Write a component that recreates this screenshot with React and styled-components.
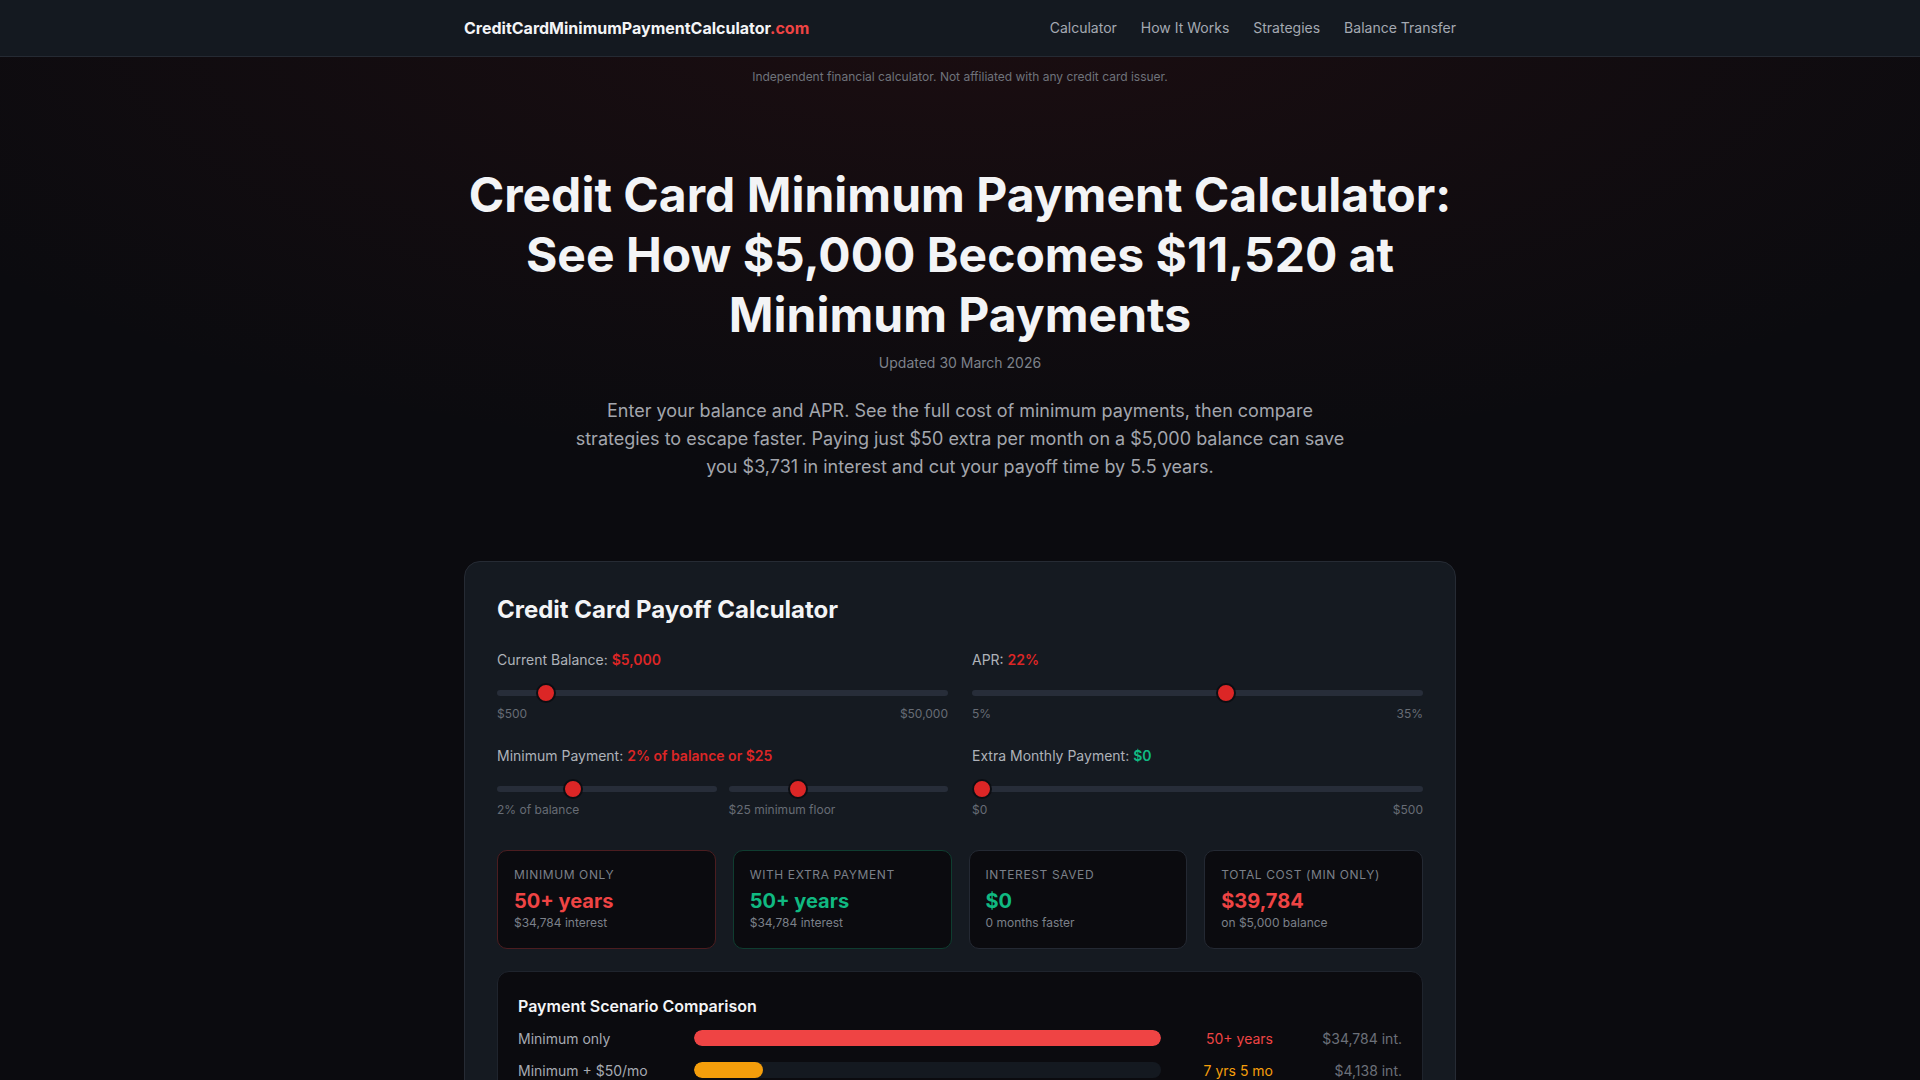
import React, { useState } from 'react';
import styled, { createGlobalStyle } from 'styled-components';

const GlobalStyle = createGlobalStyle`
  * { box-sizing: border-box; }
  body {
    margin: 0;
    background: #0b0b0f;
    color: #e5e7eb;
    font-family: Inter, "Noto Sans", "Liberation Sans", sans-serif;
    -webkit-font-smoothing: antialiased;
  }
`;

const Page = styled.div`
  min-height: 100vh;
  background:
    radial-gradient(ellipse 90% 55% at 50% 0%, rgba(127, 29, 29, 0.14), rgba(11, 11, 15, 0) 70%),
    #0b0b0f;
`;

const Nav = styled.header`
  height: 57px;
  background: #141920;
  border-bottom: 1px solid #252a33;
`;

const NavInner = styled.div`
  max-width: 992px;
  height: 100%;
  margin: 0 auto;
  display: flex;
  align-items: center;
  justify-content: space-between;
  padding-bottom: 1px;
`;

const Logo = styled.a`
  font-size: 16px;
  font-weight: 700;
  color: #f3f4f6;
  text-decoration: none;

  span {
    color: #ef4444;
  }
`;

const NavLinks = styled.nav`
  display: flex;
  gap: 24px;

  a {
    font-size: 14px;
    color: #a4a9b2;
    text-decoration: none;
  }
`;

const Disclaimer = styled.p`
  margin: 0;
  padding-top: 12px;
  text-align: center;
  font-size: 12px;
  line-height: 16px;
  color: #6f737b;
`;

const Hero = styled.section`
  max-width: 992px;
  margin: 0 auto;
  padding: 80px 0 80px;
  text-align: center;
`;

const Title = styled.h1`
  margin: 0;
  font-size: 48px;
  line-height: 60px;
  font-weight: 700;
  color: #f3f4f6;
`;

const Updated = styled.p`
  margin: 8px 0 0;
  font-size: 14px;
  line-height: 20px;
  color: #7d828b;
`;

const Lead = styled.p`
  margin: 24px auto 0;
  max-width: 780px;
  font-size: 18px;
  line-height: 28px;
  color: #a3a6ad;
`;

const Card = styled.section`
  max-width: 992px;
  margin: 0 auto;
  padding: 32px 32px 40px;
  background: #151a21;
  border: 1px solid #262b34;
  border-radius: 16px;
`;

const CardTitle = styled.h2`
  margin: 0 0 24px;
  font-size: 24px;
  line-height: 32px;
  font-weight: 700;
  color: #f3f4f6;
`;

const Controls = styled.div`
  display: grid;
  grid-template-columns: 1fr 1fr;
  column-gap: 24px;
  row-gap: 24px;
`;

const Field = styled.div`
  display: flex;
  flex-direction: column;
`;

const Label = styled.div`
  font-size: 14px;
  line-height: 20px;
  color: #aeb2b9;

  b {
    font-weight: 600;
    color: ${({ $tone }) => ($tone === 'green' ? '#10b981' : '#dc2626')};
  }
`;

const SliderPair = styled.div`
  display: grid;
  grid-template-columns: 1fr 1fr;
  gap: 12px;
`;

const Range = styled.input`
  -webkit-appearance: none;
  appearance: none;
  width: 100%;
  height: 20px;
  margin: 13px 0 3px;
  background: transparent;

  &::-webkit-slider-runnable-track {
    height: 6px;
    border-radius: 3px;
    background: #272d39;
  }

  &::-webkit-slider-thumb {
    -webkit-appearance: none;
    width: 20px;
    height: 20px;
    margin-top: -7px;
    border-radius: 50%;
    background: #dc2626;
    border: 2px solid #0c0e13;
  }
`;

const Scale = styled.div`
  display: flex;
  justify-content: space-between;
  font-size: 12px;
  line-height: 16px;
  color: #676c75;
`;

const Stats = styled.div`
  margin-top: 32px;
  display: grid;
  grid-template-columns: repeat(4, 1fr);
  gap: 17px;
`;

const borderFor = tone =>
  tone === 'red' ? '#4c1d20' : tone === 'green' ? '#0f3d30' : '#242933';

const Stat = styled.div`
  padding: 16px 16px 17px;
  background: #0b0b0f;
  border: 1px solid ${({ $tone }) => borderFor($tone)};
  border-radius: 10px;
`;

const StatLabel = styled.div`
  font-size: 12px;
  line-height: 16px;
  letter-spacing: 0.05em;
  text-transform: uppercase;
  color: #7b8089;
`;

const StatValue = styled.div`
  margin-top: 4px;
  font-size: 20px;
  line-height: 28px;
  font-weight: 700;
  color: ${({ $color }) => $color};
`;

const StatSub = styled.div`
  font-size: 12px;
  line-height: 16px;
  color: #7b8089;
`;

const Compare = styled.div`
  margin-top: 22px;
  padding: 22px 20px 24px;
  background: #0b0b0f;
  border: 1px solid #1f242d;
  border-radius: 12px;
`;

const CompareTitle = styled.h3`
  margin: 0 0 10px;
  font-size: 16px;
  line-height: 24px;
  font-weight: 600;
  color: #f3f4f6;
`;

const Rows = styled.div`
  display: flex;
  flex-direction: column;
  gap: 12px;
`;

const Row = styled.div`
  display: grid;
  grid-template-columns: 176px 1fr 112px 129px;
  align-items: center;
  height: 20px;
  font-size: 14px;
`;

const RowLabel = styled.div`
  color: #a6aab2;
`;

const Track = styled.div`
  height: 16px;
  border-radius: 8px;
  background: #141920;
  overflow: hidden;
`;

const Fill = styled.div`
  height: 100%;
  border-radius: 8px;
  background: ${({ $color }) => $color};
`;

const RowTime = styled.div`
  text-align: right;
  color: ${({ $color }) => $color};
`;

const RowInt = styled.div`
  text-align: right;
  color: #6b7079;
`;

const scenarios = [
  { label: 'Minimum only', pct: 100, color: '#ef4444', time: '50+ years', interest: '$34,784 int.' },
  { label: 'Minimum + $50/mo', pct: 14.7, color: '#f59e0b', time: '7 yrs 5 mo', interest: '$4,138 int.' },
  { label: 'Minimum + $100/mo', pct: 8.6, color: '#10b981', time: '4 yrs 4 mo', interest: '$2,401 int.' },
  { label: 'Minimum + $200/mo', pct: 4.9, color: '#10b981', time: '2 yrs 6 mo', interest: '$1,372 int.' },
];

const App = () => {
  const [balance, setBalance] = useState(5000);
  const [apr, setApr] = useState(22);
  const [pct, setPct] = useState(2);
  const [floor, setFloor] = useState(25);
  const [extra, setExtra] = useState(0);

  return (
    <Page>
      <GlobalStyle />
      <Nav>
        <NavInner>
          <Logo href="#">
            CreditCardMinimumPaymentCalculator<span>.com</span>
          </Logo>
          <NavLinks>
            <a href="#">Calculator</a>
            <a href="#">How It Works</a>
            <a href="#">Strategies</a>
            <a href="#">Balance Transfer</a>
          </NavLinks>
        </NavInner>
      </Nav>
      <Disclaimer>Independent financial calculator. Not affiliated with any credit card issuer.</Disclaimer>

      <Hero>
        <Title>
          Credit Card Minimum Payment Calculator: See How $5,000 Becomes $11,520 at Minimum Payments
        </Title>
        <Updated>Updated 30 March 2026</Updated>
        <Lead>
          Enter your balance and APR. See the full cost of minimum payments, then compare strategies to
          escape faster. Paying just $50 extra per month on a $5,000 balance can save you $3,731 in
          interest and cut your payoff time by 5.5 years.
        </Lead>
      </Hero>

      <Card>
        <CardTitle>Credit Card Payoff Calculator</CardTitle>
        <Controls>
          <Field>
            <Label>
              Current Balance: <b>${balance.toLocaleString('en-US')}</b>
            </Label>
            <Range type="range" min={500} max={50000} step={100} value={balance} onChange={e => setBalance(+e.target.value)} />
            <Scale>
              <span>$500</span>
              <span>$50,000</span>
            </Scale>
          </Field>
          <Field>
            <Label>
              APR: <b>{apr}%</b>
            </Label>
            <Range type="range" min={5} max={35} value={apr} onChange={e => setApr(+e.target.value)} />
            <Scale>
              <span>5%</span>
              <span>35%</span>
            </Scale>
          </Field>
          <Field>
            <Label>
              Minimum Payment: <b>{pct}% of balance or ${floor}</b>
            </Label>
            <SliderPair>
              <Field>
                <Range type="range" min={1} max={4} step={0.5} value={pct} onChange={e => setPct(+e.target.value)} />
                <Scale>
                  <span>{pct}% of balance</span>
                </Scale>
              </Field>
              <Field>
                <Range type="range" min={10} max={60} step={5} value={floor} onChange={e => setFloor(+e.target.value)} />
                <Scale>
                  <span>${floor} minimum floor</span>
                </Scale>
              </Field>
            </SliderPair>
          </Field>
          <Field>
            <Label $tone="green">
              Extra Monthly Payment: <b>${extra}</b>
            </Label>
            <Range type="range" min={0} max={500} step={10} value={extra} onChange={e => setExtra(+e.target.value)} />
            <Scale>
              <span>$0</span>
              <span>$500</span>
            </Scale>
          </Field>
        </Controls>

        <Stats>
          <Stat $tone="red">
            <StatLabel>Minimum Only</StatLabel>
            <StatValue $color="#ef4444">50+ years</StatValue>
            <StatSub>$34,784 interest</StatSub>
          </Stat>
          <Stat $tone="green">
            <StatLabel>With Extra Payment</StatLabel>
            <StatValue $color="#10b981">50+ years</StatValue>
            <StatSub>$34,784 interest</StatSub>
          </Stat>
          <Stat>
            <StatLabel>Interest Saved</StatLabel>
            <StatValue $color="#10b981">$0</StatValue>
            <StatSub>0 months faster</StatSub>
          </Stat>
          <Stat>
            <StatLabel>Total Cost (Min Only)</StatLabel>
            <StatValue $color="#ef4444">$39,784</StatValue>
            <StatSub>on $5,000 balance</StatSub>
          </Stat>
        </Stats>

        <Compare>
          <CompareTitle>Payment Scenario Comparison</CompareTitle>
          <Rows>
            {scenarios.map(s => (
              <Row key={s.label}>
                <RowLabel>{s.label}</RowLabel>
                <Track>
                  <Fill $color={s.color} style={{ width: `${s.pct}%` }} />
                </Track>
                <RowTime $color={s.color}>{s.time}</RowTime>
                <RowInt>{s.interest}</RowInt>
              </Row>
            ))}
          </Rows>
        </Compare>
      </Card>
    </Page>
  );
};

export default App;
